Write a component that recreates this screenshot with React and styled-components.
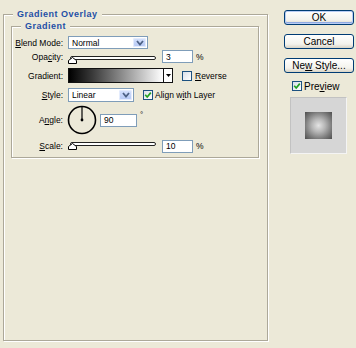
import React from "react";
import styled, { createGlobalStyle } from "styled-components";

const Global = createGlobalStyle`
  html, body { margin: 0; padding: 0; background: #ECE9D8; }
  body {
    width: 356px; height: 348px; overflow: hidden;
    font-family: "Liberation Sans", Arial, sans-serif; color: #000;
  }
  * { box-sizing: border-box; }
`;

const Dialog = styled.div`
  display: flex;
  align-items: flex-start;
  width: 356px;
  height: 348px;
`;

const GroupBox = styled.fieldset`
  min-width: 0;
  margin: ${(p) => (p.$outer ? "8px 0 0 3px" : "0 8px 0 7px")};
  padding: ${(p) => (p.$outer ? "0" : "0 0 5px 0")};
  width: ${(p) => (p.$outer ? "265px" : "auto")};
  height: ${(p) => (p.$outer ? "333px" : "auto")};
  border: 1px solid #ACA899;
  box-shadow: inset 1px 1px 0 #fff, 1px 1px 0 #fff;
`;

const Legend = styled.legend`
  margin-left: 9px;
  padding: 0 4px;
  font-size: 9px;
  line-height: 12px;
  font-weight: bold;
  letter-spacing: 0.5px;
  color: #1F4FA6;
  background: #ECE9D8;
`;

const Row = styled.div`
  display: flex;
  align-items: center;
  height: ${(p) => p.$h}px;
  margin-top: ${(p) => p.$mt}px;
`;

const Label = styled.span`
  flex-shrink: 0;
  width: 51px;
  margin-right: 5px;
  text-align: right;
  font-size: 8.5px;
  white-space: nowrap;
`;

const Text = styled.span`
  font-size: ${(p) => p.$size || 8.5}px;
  margin-left: ${(p) => p.$ml || 0}px;
  white-space: nowrap;
`;

const Key = styled.span`
  text-decoration: underline;
`;

const Select = styled.div`
  display: flex;
  width: ${(p) => p.$w}px;
  height: ${(p) => p.$h}px;
  padding: 1px;
  background: #fff;
  border: 1px solid #7F9DB9;
`;

const SelectValue = styled.span`
  flex: 1;
  display: flex;
  align-items: center;
  padding-left: 2px;
  font-size: 8.5px;
`;

const SelectArrow = styled.span`
  width: 13px;
  display: flex;
  align-items: center;
  justify-content: center;
  border-radius: 2px;
  background: linear-gradient(#D6E2FC, #B4C7F4);
  box-shadow: inset 0 0 0 1px #E4ECFD;
`;

const Slider = styled.div`
  position: relative;
  align-self: flex-start;
  width: 88px;
  height: 8px;
  margin-top: ${(p) => p.$top}px;
`;

const Track = styled.div`
  margin-left: 2px;
  height: 4px;
  border: 1px solid #222;
  border-radius: 2px;
  background: #fff;
`;

const Thumb = styled.svg`
  position: absolute;
  left: 0;
  top: 1px;
`;

const Field = styled.div`
  display: flex;
  align-items: center;
  width: ${(p) => p.$w}px;
  height: 13px;
  margin-left: ${(p) => p.$ml}px;
  padding-left: 3px;
  background: #fff;
  border: 1px solid #7F9DB9;
  font-size: 8.5px;
`;

const GradientPicker = styled.div`
  display: flex;
  width: 105px;
  height: 15px;
  border: 1px solid #111;
`;

const GradientSwatch = styled.div`
  flex: 1;
  background: linear-gradient(to right, #000 0%, #3a3a3a 25%, #fff 100%);
`;

const GradientDrop = styled.div`
  width: 9px;
  display: flex;
  align-items: center;
  justify-content: center;
  background: #fff;
  border-left: 1px solid #111;
`;

const Check = styled.span`
  display: inline-flex;
  align-items: center;
  justify-content: center;
  flex-shrink: 0;
  width: 10px;
  height: 10px;
  margin-left: ${(p) => p.$ml || 0}px;
  border: 1px solid #1C5180;
  background: linear-gradient(135deg, #D8DFEA, #fff);
`;

const Dial = styled.svg`
  margin-left: -1px;
  flex-shrink: 0;
`;

const Degree = styled.span`
  align-self: flex-start;
  margin: 6px 0 0 3px;
  font-size: 8px;
  line-height: 8px;
`;

const Side = styled.div`
  display: flex;
  flex-direction: column;
  width: 70px;
  margin: 10px 0 0 16px;
`;

const Button = styled.button`
  width: 70px;
  height: 15px;
  margin: 0 0 9px 0;
  padding: 0;
  font-family: inherit;
  font-size: 10px;
  line-height: 13px;
  color: #000;
  border: 1px solid #003C74;
  border-radius: 3px;
  background: linear-gradient(#FFFFFF, #F3F2EC 70%, #D9D4C6);
  box-shadow: ${(p) =>
    p.$default ? "inset 0 0 0 1px #B9CDF4, inset 0 -1px 0 1px #8FA9E2" : "none"};
`;

const PreviewToggle = styled.div`
  display: flex;
  align-items: center;
  height: 12px;
  margin-top: -2px;
  padding-left: 8px;
`;

const PreviewBox = styled.div`
  display: flex;
  align-items: center;
  justify-content: center;
  width: 57px;
  height: 57px;
  margin: 5px 0 0 6px;
  background: #D6D6D6;
  border-top: 1px solid #C2C2C2;
  border-left: 1px solid #C2C2C2;
  border-right: 1px solid #F4F4F4;
  border-bottom: 1px solid #F4F4F4;
`;

const PreviewSwatch = styled.div`
  width: 27px;
  height: 27px;
  background: radial-gradient(circle, #E4E4E4 0%, #B5B5B5 35%, #777 72%, #4E4E4E 100%);
`;

const Chevron = () => (
  <svg width="8" height="6" viewBox="0 0 8 6">
    <polyline points="1,1 4,4.5 7,1" fill="none" stroke="#4D6185" strokeWidth="1.8" />
  </svg>
);

const SliderThumb = () => (
  <Thumb width="9" height="7" viewBox="0 0 9 7">
    <polygon points="4.5,0.5 8.5,3.5 8.5,6.5 0.5,6.5 0.5,3.5" fill="#fff" stroke="#000" strokeWidth="1" />
  </Thumb>
);

const Tick = () => (
  <svg width="8" height="8" viewBox="0 0 8 8">
    <polyline points="1.2,3.8 3.2,6 6.8,1.6" fill="none" stroke="#21A121" strokeWidth="1.7" />
  </svg>
);

export default function App() {
  return (
    <>
      <Global />
      <Dialog>
        <GroupBox $outer>
          <Legend>Gradient Overlay</Legend>
          <GroupBox>
            <Legend>Gradient</Legend>

            <Row $h={13} $mt={4}>
              <Label>
                <Key>B</Key>lend Mode:
              </Label>
              <Select $w={80} $h={13}>
                <SelectValue>Normal</SelectValue>
                <SelectArrow>
                  <Chevron />
                </SelectArrow>
              </Select>
            </Row>

            <Row $h={13} $mt={1}>
              <Label>
                Opa<Key>c</Key>ity:
              </Label>
              <Slider $top={6}>
                <Track />
                <SliderThumb />
              </Slider>
              <Field $w={31} $ml={6}>3</Field>
              <Text $ml={3}>%</Text>
            </Row>

            <Row $h={15} $mt={5}>
              <Label>Gradient:</Label>
              <GradientPicker>
                <GradientSwatch />
                <GradientDrop>
                  <svg width="5" height="3" viewBox="0 0 5 3">
                    <polygon points="0,0 5,0 2.5,3" fill="#000" />
                  </svg>
                </GradientDrop>
              </GradientPicker>
              <Check $ml={9} />
              <Text $ml={3}>
                <Key>R</Key>everse
              </Text>
            </Row>

            <Row $h={14} $mt={5}>
              <Label>
                <Key>S</Key>tyle:
              </Label>
              <Select $w={66} $h={14}>
                <SelectValue>Linear</SelectValue>
                <SelectArrow>
                  <Chevron />
                </SelectArrow>
              </Select>
              <Check $ml={9}>
                <Tick />
              </Check>
              <Text $ml={2}>
                Align w<Key>i</Key>th Layer
              </Text>
            </Row>

            <Row $h={30} $mt={3}>
              <Label>
                A<Key>n</Key>gle:
              </Label>
              <Dial width="30" height="30" viewBox="0 0 30 30">
                <circle cx="15" cy="15" r="13.5" fill="none" stroke="#000" strokeWidth="1.6" />
                <line x1="15" y1="15" x2="15" y2="2" stroke="#000" strokeWidth="1.2" />
                <circle cx="15" cy="15" r="1.4" fill="#000" />
              </Dial>
              <Field $w={37} $ml={3}>90</Field>
              <Degree>°</Degree>
            </Row>

            <Row $h={12} $mt={5}>
              <Label>
                <Key>S</Key>cale:
              </Label>
              <Slider $top={2}>
                <Track />
                <SliderThumb />
              </Slider>
              <Field $w={31} $ml={6}>10</Field>
              <Text $ml={3}>%</Text>
            </Row>
          </GroupBox>
        </GroupBox>

        <Side>
          <Button $default>OK</Button>
          <Button>Cancel</Button>
          <Button>
            Ne<Key>w</Key> Style...
          </Button>
          <PreviewToggle>
            <Check>
              <Tick />
            </Check>
            <Text $size={10} $ml={2}>
              Pre<Key>v</Key>iew
            </Text>
          </PreviewToggle>
          <PreviewBox>
            <PreviewSwatch />
          </PreviewBox>
        </Side>
      </Dialog>
    </>
  );
}
